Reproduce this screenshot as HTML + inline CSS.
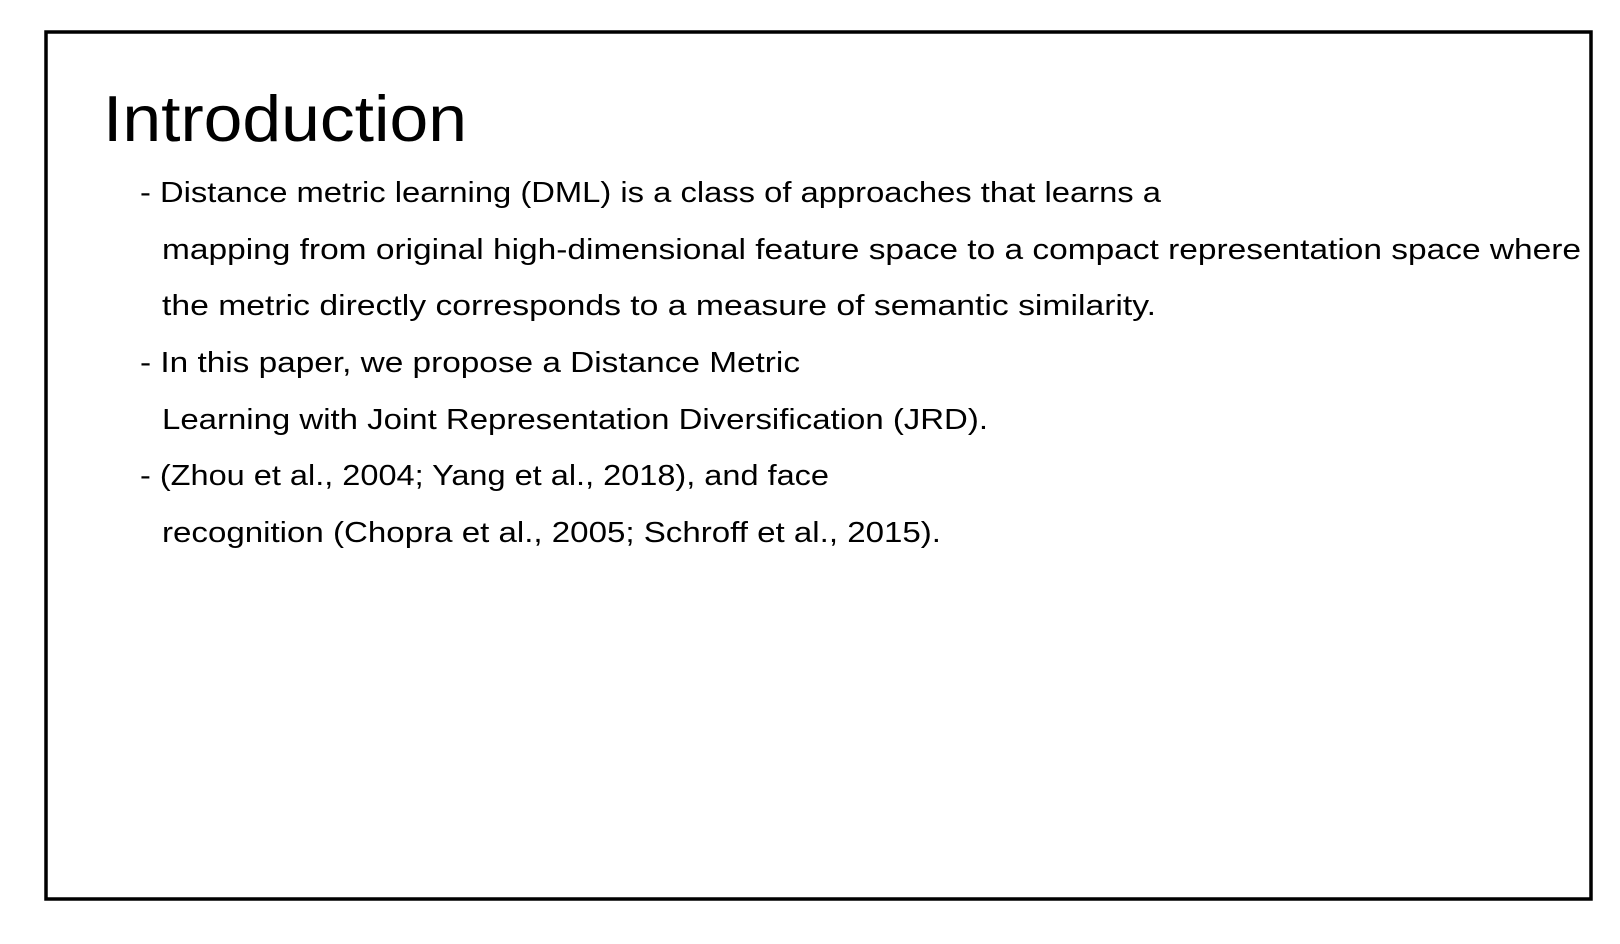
<!DOCTYPE html>
<html><head><meta charset="utf-8"><style>
html,body{margin:0;padding:0;background:#fff;}
svg{display:block;}
text{font-family:"Liberation Sans",sans-serif;fill:#000;}
</style></head><body>
<svg width="1620" height="944" viewBox="0 0 1620 944" xmlns="http://www.w3.org/2000/svg">
<rect x="0" y="0" width="1620" height="944" fill="#fff"/>
<rect x="46" y="32" width="1545" height="867" fill="none" stroke="#000" stroke-width="3.5"/>
<text x="103" y="141" font-size="65" textLength="364" lengthAdjust="spacingAndGlyphs">Introduction</text>
<g font-size="29">
<text x="140" y="202" textLength="1021" lengthAdjust="spacingAndGlyphs">- Distance metric learning (DML) is a class of approaches that learns a</text>
<text x="162" y="259" textLength="1419" lengthAdjust="spacingAndGlyphs">mapping from original high-dimensional feature space to a compact representation space where</text>
<text x="162" y="315" textLength="994" lengthAdjust="spacingAndGlyphs">the metric directly corresponds to a measure of semantic similarity.</text>
<text x="140" y="372" textLength="660" lengthAdjust="spacingAndGlyphs">- In this paper, we propose a Distance Metric</text>
<text x="162" y="429" textLength="826" lengthAdjust="spacingAndGlyphs">Learning with Joint Representation Diversification (JRD).</text>
<text x="140" y="485" textLength="689" lengthAdjust="spacingAndGlyphs">- (Zhou et al., 2004; Yang et al., 2018), and face</text>
<text x="162" y="542" textLength="779" lengthAdjust="spacingAndGlyphs">recognition (Chopra et al., 2005; Schroff et al., 2015).</text>
</g>
</svg>
</body></html>
